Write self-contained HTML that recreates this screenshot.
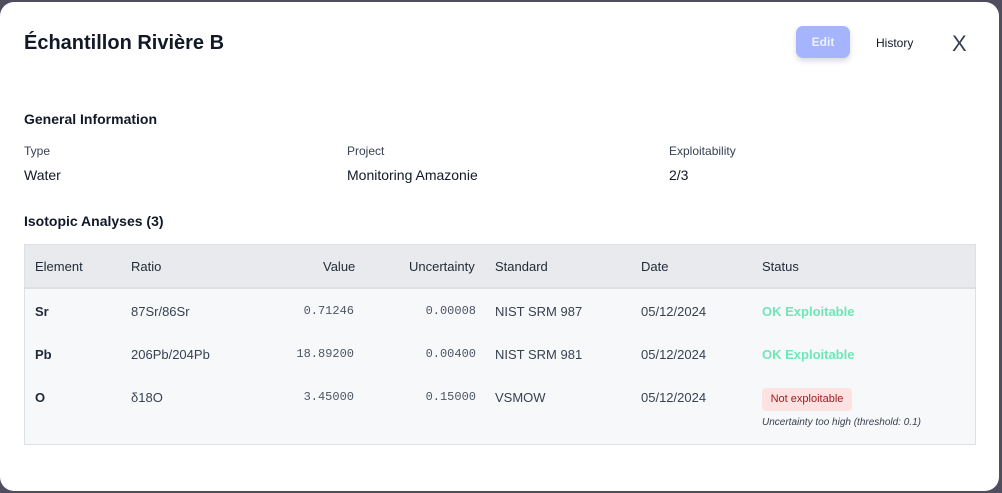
<!DOCTYPE html>
<html><head><meta charset="utf-8"><style>
*{margin:0;padding:0;box-sizing:border-box}
body{width:1002px;height:493px;background:#4f4d5e;font-family:"Liberation Sans",sans-serif;position:relative;overflow:hidden;color:#111827}
.modal{position:absolute;left:0;top:2px;width:999px;height:489px;background:#fff;border-radius:14px}
.a{position:absolute;white-space:nowrap}
.lbl{font-size:12px;color:#374151}
.val{font-size:14px;color:#111827}
.th{font-size:13px;color:#1f2937}
.td{font-size:13px;color:#374151}
.mono{font-family:"Liberation Mono",monospace;font-size:12px;color:#4b5563}
.ok{font-size:13px;font-weight:bold;color:#6ee7b7}
</style></head><body>
<div class="modal"></div>
<div class="a" style="left:24px;top:32px;font-size:20px;font-weight:bold;color:#111827">Échantillon Rivière B</div>
<div class="a" style="left:796px;top:26px;width:54px;height:32px;background:#a5b4fc;border-radius:7px;box-shadow:0 3px 6px rgba(0,0,0,.15);color:#eef2ff;font-size:12px;font-weight:bold;text-align:center;line-height:32px">Edit</div>
<div class="a" style="left:876px;top:36px;font-size:12px;color:#111827">History</div>
<div class="a" style="left:952px;top:31px;font-size:22px;color:#374151">X</div>
<div class="a" style="left:24px;top:111px;font-size:14px;font-weight:bold">General Information</div>
<div class="a lbl" style="left:24px;top:144px">Type</div>
<div class="a lbl" style="left:347px;top:144px">Project</div>
<div class="a lbl" style="left:669px;top:144px">Exploitability</div>
<div class="a val" style="left:24px;top:167px">Water</div>
<div class="a val" style="left:347px;top:167px">Monitoring Amazonie</div>
<div class="a val" style="left:669px;top:167px">2/3</div>
<div class="a" style="left:24px;top:213px;font-size:14px;font-weight:bold">Isotopic Analyses (3)</div>
<div class="a" style="left:24px;top:244px;width:952px;height:201px;background:#f7f8fa;border:1px solid #dde1e6"></div>
<div class="a" style="left:25px;top:245px;width:950px;height:44px;background:#e8eaed;border-bottom:2px solid #dde1e6"></div>
<div class="a th" style="left:35px;top:259px">Element</div>
<div class="a th" style="left:131px;top:259px">Ratio</div>
<div class="a th" style="left:323px;top:259px">Value</div>
<div class="a th" style="left:409px;top:259px">Uncertainty</div>
<div class="a th" style="left:495px;top:259px">Standard</div>
<div class="a th" style="left:641px;top:259px">Date</div>
<div class="a th" style="left:762px;top:259px">Status</div>

<div class="a td" style="left:35px;top:304px;font-weight:bold;color:#1f2937">Sr</div>
<div class="a td" style="left:131px;top:304px">87Sr/86Sr</div>
<div class="a mono" style="right:648px;top:304px">0.71246</div>
<div class="a mono" style="right:526px;top:304px">0.00008</div>
<div class="a td" style="left:495px;top:304px">NIST SRM 987</div>
<div class="a td" style="left:641px;top:304px">05/12/2024</div>
<div class="a ok" style="left:762px;top:304px">OK Exploitable</div>

<div class="a td" style="left:35px;top:347px;font-weight:bold;color:#1f2937">Pb</div>
<div class="a td" style="left:131px;top:347px">206Pb/204Pb</div>
<div class="a mono" style="right:648px;top:347px">18.89200</div>
<div class="a mono" style="right:526px;top:347px">0.00400</div>
<div class="a td" style="left:495px;top:347px">NIST SRM 981</div>
<div class="a td" style="left:641px;top:347px">05/12/2024</div>
<div class="a ok" style="left:762px;top:347px">OK Exploitable</div>

<div class="a td" style="left:35px;top:390px;font-weight:bold;color:#1f2937">O</div>
<div class="a td" style="left:131px;top:390px">δ18O</div>
<div class="a mono" style="right:648px;top:390px">3.45000</div>
<div class="a mono" style="right:526px;top:390px">0.15000</div>
<div class="a td" style="left:495px;top:390px">VSMOW</div>
<div class="a td" style="left:641px;top:390px">05/12/2024</div>
<div class="a" style="left:762px;top:388px;width:90px;height:23px;background:#fee2e2;border-radius:4px;color:#991b1b;font-size:11px;text-align:center;line-height:23px">Not exploitable</div>
<div class="a" style="left:762px;top:417px;font-size:10px;font-style:italic;color:#374151">Uncertainty too high (threshold: 0.1)</div>
</body></html>
